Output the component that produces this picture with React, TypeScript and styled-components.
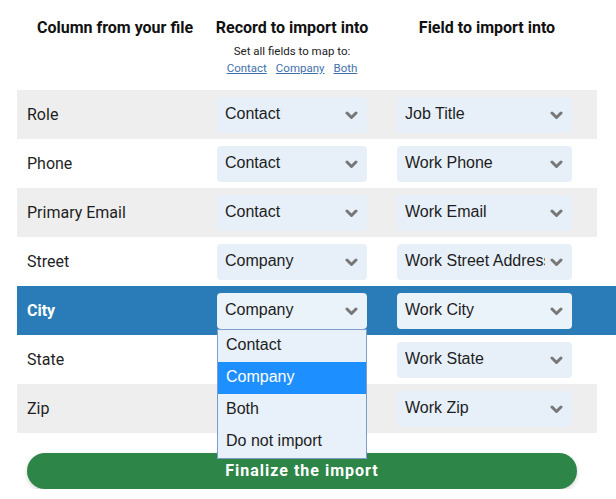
import React from "react";
import styled, { createGlobalStyle } from "styled-components";

const GlobalStyle = createGlobalStyle`
  html, body {
    margin: 0;
    padding: 0;
    background: #ffffff;
    overflow: hidden;
    font-family: Roboto, "Liberation Sans", Arial, sans-serif;
    color: #1a1a1a;
  }
`;

const Page = styled.div`
  padding: 18px 0 0 17px;
  width: 616px;
  box-sizing: border-box;
`;

const HeaderRow = styled.div`
  display: grid;
  grid-template-columns: 196px 158px 232px;
  align-items: start;
  height: 72px;
`;

const HeaderCell = styled.div`
  display: flex;
  flex-direction: column;
  align-items: center;
  text-align: center;
`;

const HeaderTitle = styled.div`
  font-weight: 700;
  font-size: 16px;
  line-height: 19px;
  color: #111;
`;

const SetAllText = styled.div`
  margin-top: 7px;
  font-size: 11.5px;
  line-height: 14px;
  color: #222;
`;

const LinkRow = styled.div`
  display: flex;
  gap: 9px;
  margin-top: 3px;
`;

const MapLink = styled.a`
  font-size: 11.5px;
  line-height: 14px;
  color: #3f72ad;
  text-decoration: underline;
  cursor: pointer;
`;

const Table = styled.div`
  width: 580px;
`;

const Row = styled.div<{ $tone: "grey" | "white" | "active" }>`
  display: grid;
  grid-template-columns: 200px 180px 200px;
  align-items: center;
  height: 49px;
  background: ${(p) =>
    p.$tone === "grey" ? "#eeeeee" : p.$tone === "active" ? "#2a7cb9" : "#ffffff"};
  margin-right: ${(p) => (p.$tone === "active" ? "-40px" : "0")};
`;

const Label = styled.div<{ $active?: boolean }>`
  padding-left: 10px;
  font-size: 16px;
  font-weight: ${(p) => (p.$active ? 700 : 400)};
  color: ${(p) => (p.$active ? "#ffffff" : "#1f1f1f")};
`;

const SelectWrap = styled.div`
  position: relative;
`;

const SelectBox = styled.div<{ $width: number; $active?: boolean }>`
  position: relative;
  box-sizing: border-box;
  width: ${(p) => p.$width}px;
  height: 36px;
  padding: 0 27px 2px 8px;
  display: flex;
  align-items: center;
  border-radius: 4px;
  background: ${(p) => (p.$active ? "#eaf2fa" : "#e7f0f9")};
  font-family: "Liberation Sans", Arial, sans-serif;
  font-size: 16px;
  color: #1d1d1d;
`;

const SelectValue = styled.span`
  display: block;
  flex: 1;
  min-width: 0;
  white-space: nowrap;
  overflow: hidden;
`;

const Chevron = styled.svg`
  position: absolute;
  right: 9px;
  top: 50%;
  width: 13px;
  height: 9px;
  margin-top: -4px;
`;

const Menu = styled.div`
  position: absolute;
  top: 36px;
  left: 0;
  z-index: 5;
  width: 150px;
  box-sizing: border-box;
  background: #e8f0f9;
  border: 1px solid #7d9dc8;
  font-family: "Liberation Sans", Arial, sans-serif;
  font-size: 16px;
`;

const MenuItem = styled.div<{ $selected?: boolean }>`
  height: 32px;
  display: flex;
  align-items: center;
  padding: 0 0 2px 8px;
  box-sizing: border-box;
  background: ${(p) => (p.$selected ? "#1e8fff" : "transparent")};
  color: ${(p) => (p.$selected ? "#ffffff" : "#1d1d1d")};
`;

const FinalizeButton = styled.button`
  display: block;
  margin: 20px 0 0 10px;
  width: 550px;
  height: 36px;
  padding: 0 0 2px;
  border: none;
  border-radius: 18px;
  background: #2e8548;
  color: #ffffff;
  font-family: Roboto, "Liberation Sans", Arial, sans-serif;
  font-weight: 700;
  font-size: 16px;
  letter-spacing: 1px;
  box-shadow: 0 2px 4px rgba(0, 0, 0, 0.18);
  cursor: pointer;
`;

const ChevronIcon = () => (
  <Chevron viewBox="0 0 13 9">
    <polyline
      points="2,2 6.5,6.5 11,2"
      fill="none"
      stroke="#777777"
      strokeWidth="3"
      strokeLinecap="round"
      strokeLinejoin="round"
    />
  </Chevron>
);

const Select = ({
  value,
  width,
  active,
}: {
  value: string;
  width: number;
  active?: boolean;
}) => (
  <SelectBox $width={width} $active={active}>
    <SelectValue>{value}</SelectValue>
    <ChevronIcon />
  </SelectBox>
);

const rows = [
  { column: "Role", record: "Contact", field: "Job Title" },
  { column: "Phone", record: "Contact", field: "Work Phone" },
  { column: "Primary Email", record: "Contact", field: "Work Email" },
  { column: "Street", record: "Company", field: "Work Street Address" },
  { column: "City", record: "Company", field: "Work City", open: true },
  { column: "State", record: "Company", field: "Work State" },
  { column: "Zip", record: "Company", field: "Work Zip" },
];

const options = ["Contact", "Company", "Both", "Do not import"];

export default function App() {
  return (
    <Page>
      <GlobalStyle />
      <HeaderRow>
        <HeaderCell>
          <HeaderTitle>Column from your file</HeaderTitle>
        </HeaderCell>
        <HeaderCell>
          <HeaderTitle>Record to import into</HeaderTitle>
          <SetAllText>Set all fields to map to:</SetAllText>
          <LinkRow>
            <MapLink>Contact</MapLink>
            <MapLink>Company</MapLink>
            <MapLink>Both</MapLink>
          </LinkRow>
        </HeaderCell>
        <HeaderCell>
          <HeaderTitle>Field to import into</HeaderTitle>
        </HeaderCell>
      </HeaderRow>
      <Table>
        {rows.map((r, i) => (
          <Row
            key={r.column}
            $tone={r.open ? "active" : i % 2 === 0 ? "grey" : "white"}
          >
            <Label $active={r.open}>{r.column}</Label>
            <SelectWrap>
              <Select value={r.record} width={150} active={r.open} />
              {r.open && (
                <Menu>
                  {options.map((o) => (
                    <MenuItem key={o} $selected={o === r.record}>
                      {o}
                    </MenuItem>
                  ))}
                </Menu>
              )}
            </SelectWrap>
            <SelectWrap>
              <Select value={r.field} width={175} active={r.open} />
            </SelectWrap>
          </Row>
        ))}
      </Table>
      <FinalizeButton>Finalize the import</FinalizeButton>
    </Page>
  );
}
